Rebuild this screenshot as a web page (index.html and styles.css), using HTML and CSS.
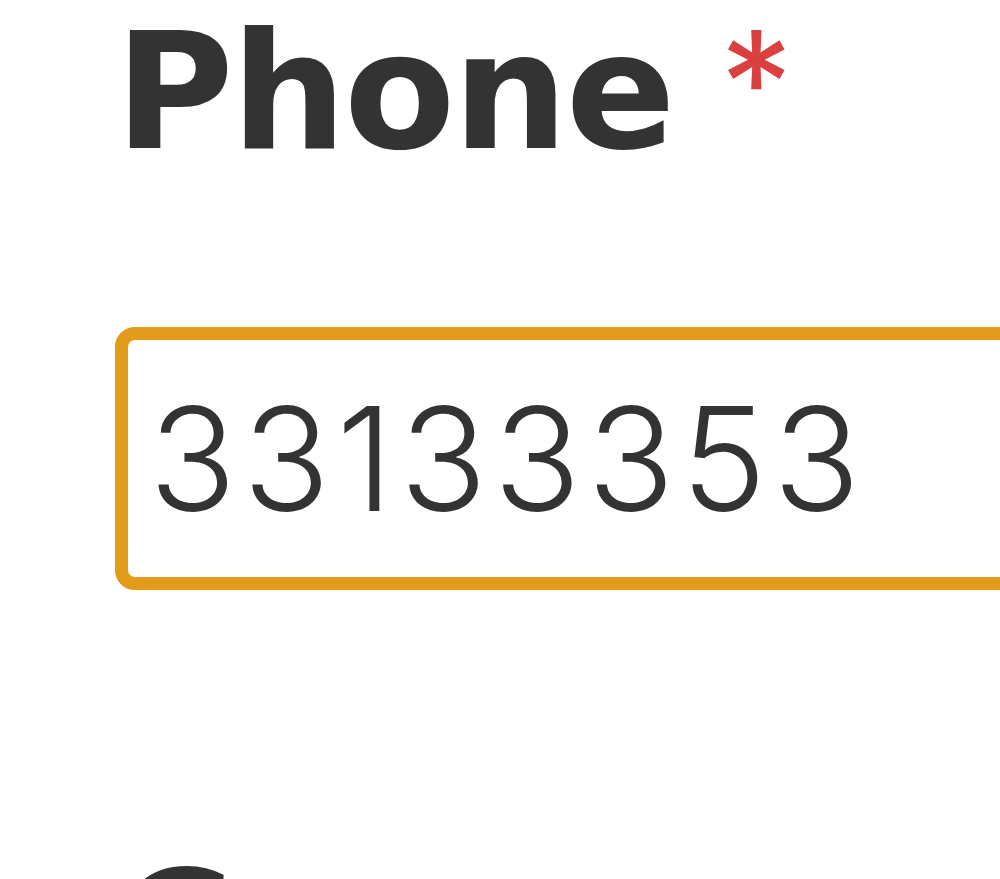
FILE: index.html
```html
<!DOCTYPE html>
<html lang="en">
<head>
<meta charset="utf-8">
<title>Phone</title>
<link rel="stylesheet" href="styles.css">
</head>
<body>
<form class="form">
  <div class="field">
    <label class="label" for="phone">Phone<span class="req">*</span></label>
    <div class="input-wrap">
      <input class="input" id="phone" type="tel" value="33133353">
    </div>
  </div>
  <div class="field">
    <label class="label" for="company">Company Name</label>
  </div>
</form>
</body>
</html>
```
FILE: styles.css
```css
html, body {
  margin: 0;
  padding: 0;
  background: #ffffff;
  overflow: hidden;
}
body {
  width: 1000px;
  height: 879px;
}
.form {
  display: flex;
  flex-direction: column;
  padding-left: 115px;
}
.field {
  display: flex;
  flex-direction: column;
}
.label {
  display: block;
  font-family: "DejaVu Sans", Inter, sans-serif;
  font-weight: 700;
  font-size: 162px;
  line-height: 185px;
  letter-spacing: -2.5px;
  color: #333333;
  white-space: nowrap;
  margin-left: 0;
}
.req {
  font-family: Inter, "Noto Sans", sans-serif;
  color: #d9403f;
  font-weight: 400;
  font-size: 145px;
  line-height: 1;
  letter-spacing: 0;
  margin-left: 47px;
  vertical-align: 13px;
}
.input-wrap {
  margin-top: 142px;
  margin-bottom: 249px;
}
.input {
  display: block;
  box-sizing: border-box;
  width: 1000px;
  height: 263px;
  border: 13px solid #e29b1b;
  border-radius: 20px;
  padding: 0 0 0 21px;
  margin: 0;
  outline: none;
  background: #ffffff;
  font-family: Inter, "Noto Sans", sans-serif;
  font-weight: 300;
  font-size: 144px;
  letter-spacing: 6.5px;
  color: #333333;
}
```
